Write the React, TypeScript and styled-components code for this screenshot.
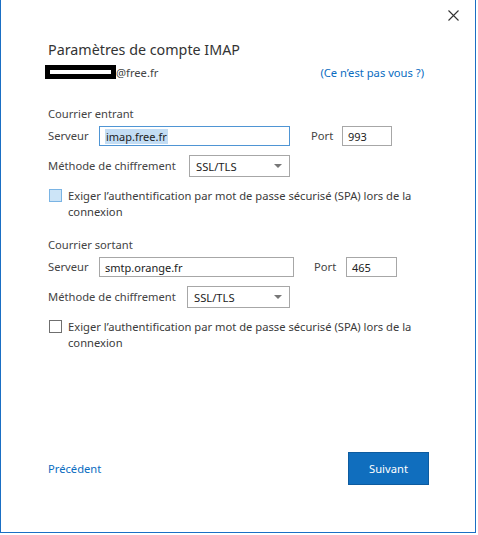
import React from "react";
import styled, { createGlobalStyle } from "styled-components";

const Global = createGlobalStyle`
  html, body { margin: 0; padding: 0; background: #ffffff; }
  body { font-family: "Noto Sans", "Open Sans", sans-serif; }
`;

const Dialog = styled.div`
  box-sizing: border-box;
  width: 476px;
  height: 533px;
  background: #fff;
  border-left: 1px solid #1a6fc4;
  border-right: 1px solid #1a6fc4;
  border-bottom: 1px solid #1a6fc4;
  display: flex;
  flex-direction: column;
  color: #3b3b3b;
  font-size: 11.2px;
`;

const TopBar = styled.div`
  height: 32px;
  display: flex;
  justify-content: flex-end;
  align-items: flex-start;
`;

const CloseButton = styled.button`
  border: 0;
  background: transparent;
  padding: 0;
  margin: 9px 16px 0 0;
  width: 12px;
  height: 12px;
  display: flex;
  align-items: center;
  justify-content: center;
  cursor: pointer;
`;

const Body = styled.div`
  padding: 0 51px 0 47px;
  display: flex;
  flex-direction: column;
  flex: 1;
`;

const Title = styled.h1`
  margin: 8px 0 0 0;
  font-size: 14.3px;
  line-height: 20px;
  font-weight: 400;
  color: #333;
`;

const AccountRow = styled.div`
  margin-top: 4px;
  height: 16px;
  display: flex;
  align-items: center;
  justify-content: space-between;
`;

const Account = styled.div`
  display: flex;
  align-items: center;
  color: #444;
`;

const Redacted = styled.span`
  box-sizing: border-box;
  margin-left: -3px;
  width: 71px;
  height: 14px;
  background: #000;
  border: 5px solid #000;
  display: flex;
  &::after {
    content: "";
    flex: 1;
    background: #fff;
  }
`;

const Link = styled.a`
  color: #0a6cbf;
  text-decoration: none;
  cursor: pointer;
`;

const SectionTitle = styled.div<{ $top: number }>`
  margin-top: ${(p) => p.$top}px;
  line-height: 16px;
  color: #444;
`;

const Row = styled.div<{ $top: number; $h: number }>`
  margin-top: ${(p) => p.$top}px;
  height: ${(p) => p.$h}px;
  display: flex;
  align-items: center;
`;

const Label = styled.span<{ $w?: number; $ml?: number }>`
  width: ${(p) => (p.$w ? `${p.$w}px` : "auto")};
  margin-left: ${(p) => p.$ml ?? 0}px;
  flex: none;
  color: #444;
  margin-top: -2px;
`;

const TextBox = styled.div<{ $w: number; $focus?: boolean }>`
  box-sizing: border-box;
  width: ${(p) => p.$w}px;
  height: 100%;
  border: 1px solid ${(p) => (p.$focus ? "#4f95d4" : "#a7a7a7")};
  padding: 0 5px;
  display: flex;
  align-items: center;
  color: #222;
  font-size: 11px;
`;

const Selected = styled.span`
  background: #c3ddf4;
  color: #1c1c1c;
  padding: 0 1px;
  line-height: 15px;
`;

const SelectBox = styled.div<{ $w: number; $ml: number }>`
  box-sizing: border-box;
  margin-left: ${(p) => p.$ml}px;
  width: ${(p) => p.$w}px;
  height: 100%;
  border: 1px solid #a7a7a7;
  padding: 0 7px 0 6px;
  display: flex;
  align-items: center;
  justify-content: space-between;
  color: #222;
`;

const Caret = styled.span`
  width: 0;
  height: 0;
  border-left: 4px solid transparent;
  border-right: 4px solid transparent;
  border-top: 4px solid #777;
`;

const CheckRow = styled.div<{ $top: number }>`
  margin-top: ${(p) => p.$top}px;
  display: flex;
  align-items: flex-start;
  line-height: 16px;
  color: #3b3b3b;
`;

const Check = styled.span<{ $hover?: boolean }>`
  box-sizing: border-box;
  flex: none;
  margin: 1px 6px 0 1px;
  width: 13px;
  height: 13px;
  border: 1px solid ${(p) => (p.$hover ? "#7ab4e4" : "#6f6f6f")};
  background: ${(p) => (p.$hover ? "#cce4f7" : "#fff")};
`;

const CheckText = styled.span`
  width: 352px;
`;

const Footer = styled.div`
  margin-top: auto;
  margin-bottom: 47px;
  margin-right: -5px;
  display: flex;
  align-items: center;
  justify-content: space-between;
`;

const PrimaryButton = styled.button`
  box-sizing: border-box;
  width: 81px;
  height: 33px;
  background: #106ebe;
  border: 1px solid #0d5b9f;
  color: #fff;
  font-family: inherit;
  font-size: 11.2px;
  cursor: pointer;
`;

type Section = {
  title: string;
  top: number;
  server: string;
  serverW: number;
  focus?: boolean;
  portGap: number;
  portW: number;
  portLabel: number;
  port: string;
  selGap: number;
  selW: number;
  hover?: boolean;
};

const sections: Section[] = [
  {
    title: "Courrier entrant",
    top: 26,
    server: "imap.free.fr",
    serverW: 191,
    focus: true,
    portGap: 21,
    portLabel: 31,
    portW: 50,
    port: "993",
    selGap: 0,
    selW: 101,
    hover: true,
  },
  {
    title: "Courrier sortant",
    top: 17,
    server: "smtp.orange.fr",
    serverW: 195,
    portGap: 20,
    portLabel: 32,
    portW: 51,
    port: "465",
    selGap: -2,
    selW: 103,
  },
];

function MailSection({ s }: { s: Section }) {
  return (
    <>
      <SectionTitle $top={s.top}>{s.title}</SectionTitle>
      <Row $top={4} $h={20}>
        <Label $w={51}>Serveur</Label>
        <TextBox $w={s.serverW} $focus={s.focus}>
          {s.focus ? <Selected>{s.server}</Selected> : s.server}
        </TextBox>
        <Label $w={s.portLabel} $ml={s.portGap}>
          Port
        </Label>
        <TextBox $w={s.portW}>{s.port}</TextBox>
      </Row>
      <Row $top={9} $h={22}>
        <Label $w={141}>Méthode de chiffrement</Label>
        <SelectBox $w={s.selW} $ml={s.selGap}>
          <span>SSL/TLS</span>
          <Caret />
        </SelectBox>
      </Row>
      <CheckRow $top={11}>
        <Check $hover={s.hover} />
        <CheckText>
          Exiger l’authentification par mot de passe sécurisé (SPA) lors de la connexion
        </CheckText>
      </CheckRow>
    </>
  );
}

export default function App() {
  return (
    <>
      <Global />
      <Dialog>
        <TopBar>
          <CloseButton aria-label="Fermer">
            <svg width="11" height="11" viewBox="0 0 11 11">
              <path d="M0.5 0.5 L10.5 10.5 M10.5 0.5 L0.5 10.5" stroke="#333" strokeWidth="1.1" />
            </svg>
          </CloseButton>
        </TopBar>
        <Body>
          <Title>Paramètres de compte IMAP</Title>
          <AccountRow>
            <Account>
              <Redacted />
              <span>@free.fr</span>
            </Account>
            <Link>(Ce n’est pas vous ?)</Link>
          </AccountRow>
          {sections.map((s) => (
            <MailSection key={s.title} s={s} />
          ))}
          <Footer>
            <Link>Précédent</Link>
            <PrimaryButton>Suivant</PrimaryButton>
          </Footer>
        </Body>
      </Dialog>
    </>
  );
}
